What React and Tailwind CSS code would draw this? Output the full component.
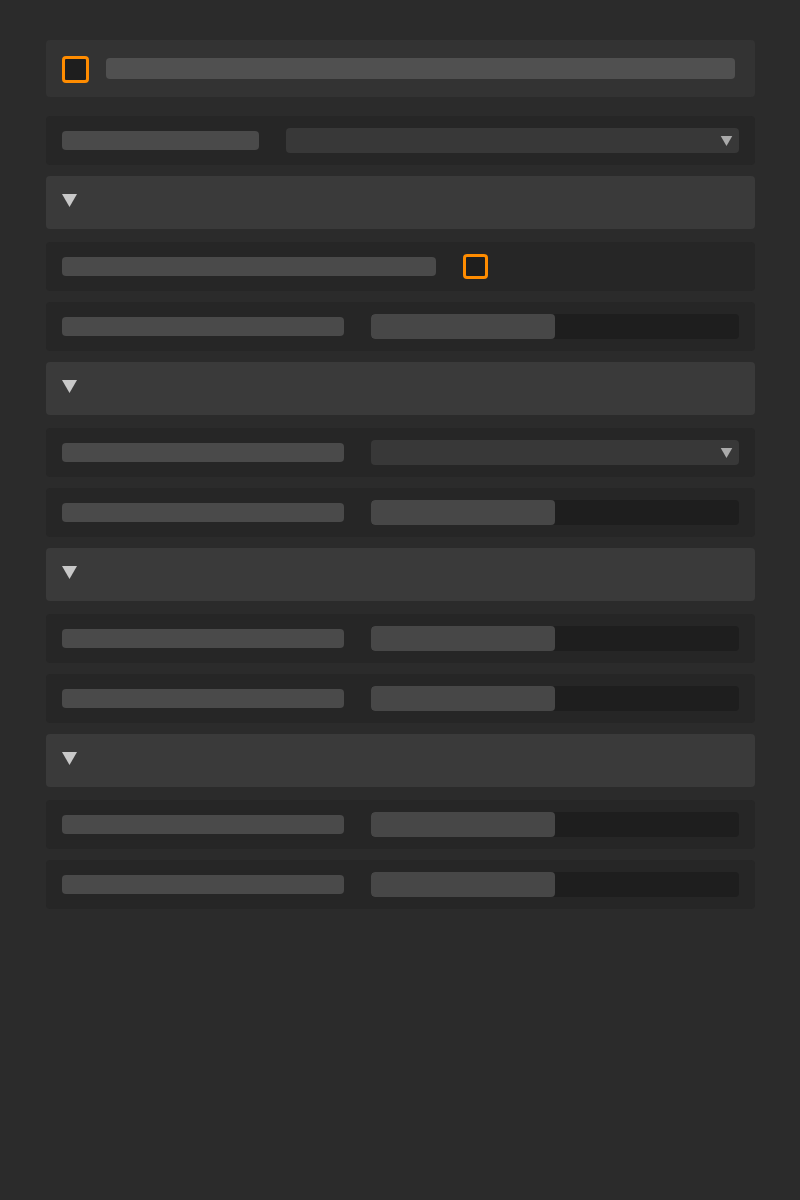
const rows = [
  { type: 'header' },
  { type: 'check', label: 'w-[374px]' },
  { type: 'slider', value: 50 },
  { type: 'header' },
  { type: 'select' },
  { type: 'slider', value: 50 },
  { type: 'header' },
  { type: 'slider', value: 50 },
  { type: 'slider', value: 50 },
  { type: 'header' },
  { type: 'slider', value: 50 },
  { type: 'slider', value: 50 },
];

function Caret({ className }) {
  return (
    <svg viewBox="0 0 15 13" className={className}>
      <path d="M0 0H15L7.5 13Z" fill="currentColor" />
    </svg>
  );
}

function Label({ className = 'w-[282px]' }) {
  return <div className={`h-[19px] shrink-0 rounded-[4px] bg-[#4a4a4a] ${className}`} />;
}

function Select({ className = 'w-[368px]' }) {
  return (
    <div className={`flex h-[25px] items-center justify-end rounded-[4px] bg-[#383838] pr-[6px] ${className}`}>
      <Caret className="h-[10px] w-[13px] text-[#aaaaaa]" />
    </div>
  );
}

function Slider({ value }) {
  return (
    <div className="h-[25px] w-[368px] overflow-hidden rounded-[4px] bg-[#1e1e1e]">
      <div className="h-full rounded-[4px] bg-[#474747]" style={{ width: `${value}%` }} />
    </div>
  );
}

function Row({ children }) {
  return (
    <div className="mb-[11px] flex h-[49px] items-center gap-[27px] rounded-[4px] bg-[#262626] px-4">
      {children}
    </div>
  );
}

export default function App() {
  return (
    <div className="min-h-[1200px] w-[800px] bg-[#2b2b2b] pt-10 font-['Liberation_Sans',sans-serif]">
      <div className="ml-[46px] flex w-[709px] flex-col">
        {/* enable toggle + name field */}
        <div className="mb-[19px] flex h-[57px] items-center gap-[17px] rounded-[4px] bg-[#333333] pl-4 pr-5">
          <div className="mt-[2px] h-[27px] w-[27px] shrink-0 rounded-[4px] border-[3px] border-[#ff8c00] bg-[#1e1e1e]" />
          <div className="h-[21px] flex-1 rounded-[4px] bg-[#505050]" />
        </div>

        <Row>
          <Label className="w-[197px]" />
          <Select className="w-[453px]" />
        </Row>

        {rows.map((r, i) => {
          if (r.type === 'header') {
            return (
              <div key={i} className="mb-[13px] flex h-[53px] items-center rounded-[4px] bg-[#3a3a3a] px-4 pb-1">
                <Caret className="h-[13px] w-[15px] text-[#c8c8c8]" />
              </div>
            );
          }
          if (r.type === 'check') {
            return (
              <Row key={i}>
                <Label className={r.label} />
                <div className="h-[25px] w-[25px] rounded-[4px] border-[3px] border-[#ff8c00] bg-[#1e1e1e]" />
              </Row>
            );
          }
          if (r.type === 'select') {
            return (
              <Row key={i}>
                <Label />
                <Select />
              </Row>
            );
          }
          return (
            <Row key={i}>
              <Label />
              <Slider value={r.value} />
            </Row>
          );
        })}
      </div>
    </div>
  );
}
